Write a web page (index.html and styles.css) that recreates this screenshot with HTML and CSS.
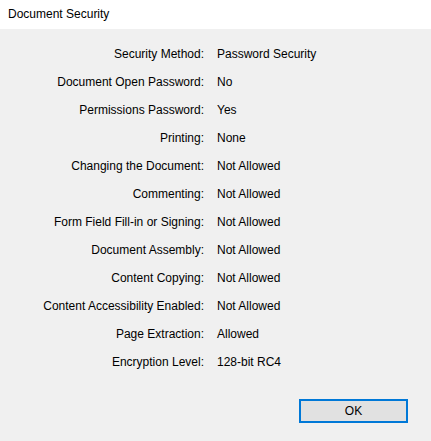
FILE: index.html
```html
<!DOCTYPE html>
<html lang="en">
<head>
    <meta charset="UTF-8">
    <title>Document Security</title>
    <link rel="stylesheet" href="styles.css">
</head>
<body>
    <div class="dialog">
        <div class="titlebar">Document Security</div>
        <div class="content">
            <div class="info">
                <div class="label">Security Method:</div><div class="value">Password Security</div>
                <div class="label">Document Open Password:</div><div class="value">No</div>
                <div class="label">Permissions Password:</div><div class="value">Yes</div>
                <div class="label">Printing:</div><div class="value">None</div>
                <div class="label">Changing the Document:</div><div class="value">Not Allowed</div>
                <div class="label">Commenting:</div><div class="value">Not Allowed</div>
                <div class="label">Form Field Fill-in or Signing:</div><div class="value">Not Allowed</div>
                <div class="label">Document Assembly:</div><div class="value">Not Allowed</div>
                <div class="label">Content Copying:</div><div class="value">Not Allowed</div>
                <div class="label">Content Accessibility Enabled:</div><div class="value">Not Allowed</div>
                <div class="label">Page Extraction:</div><div class="value">Allowed</div>
                <div class="label">Encryption Level:</div><div class="value">128-bit RC4</div>
            </div>
            <div class="buttons">
                <button class="btn">OK</button>
            </div>
        </div>
    </div>
</body>
</html>
```

FILE: styles.css
```css
* {
    margin: 0;
    padding: 0;
    box-sizing: border-box;
}

body {
    background-color: #f0f0f0;
    color: #000;
    font-family: 'Liberation Sans', Arial, sans-serif;
    font-size: 12px;
}

.dialog {
    width: 431px;
    height: 441px;
    display: flex;
    flex-direction: column;
}

.titlebar {
    background: #fff;
    height: 29px;
    line-height: 29px;
    padding-left: 8px;
}

.content {
    flex: 1;
    display: flex;
    flex-direction: column;
    padding-top: 11px;
}

.info {
    display: grid;
    grid-template-columns: 204px 1fr;
    grid-auto-rows: 28px;
    column-gap: 13px;
    align-items: center;
}

.label {
    text-align: right;
}

.buttons {
    display: flex;
    justify-content: flex-end;
    padding-right: 23px;
    margin-top: 23px;
}

.btn {
    width: 109px;
    height: 24px;
    background: #e1e1e1;
    border: 2px solid #0078d7;
    font-family: inherit;
    font-size: 12px;
    color: #000;
}
```
